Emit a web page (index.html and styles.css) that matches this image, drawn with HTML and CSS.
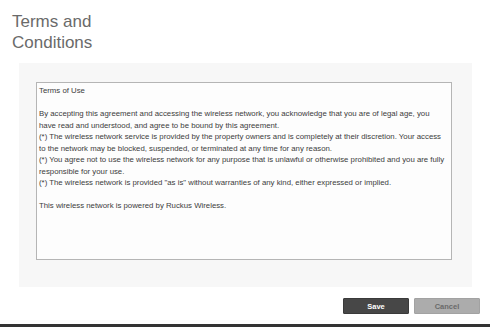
FILE: index.html
```html
<!DOCTYPE html>
<html lang="en">
<head>
    <meta charset="UTF-8">
    <meta name="viewport" content="width=device-width, initial-scale=1.0">
    <title>Terms and Conditions</title>
    <link rel="stylesheet" href="styles.css">
</head>
<body>

    <main class="page">
        <h1 class="title">Terms and<br>Conditions</h1>

        <section class="panel">
            <div class="terms">
                <p>Terms of Use</p>
                <p class="gap">By accepting this agreement and accessing the wireless network, you acknowledge that you are of legal age, you have read and understood, and agree to be bound by this agreement.<br>
                (*) The wireless network service is provided by the property owners and is completely at their discretion. Your access to the network may be blocked, suspended, or terminated at any time for any reason.<br>
                (*) You agree not to use the wireless network for any purpose that is unlawful or otherwise prohibited and you are fully responsible for your use.<br>
                (*) The wireless network is provided "as is" without warranties of any kind, either expressed or implied.</p>
                <p class="gap">This wireless network is powered by Ruckus Wireless.</p>
            </div>
        </section>

        <div class="actions">
            <button class="btn btn-save">Save</button>
            <button class="btn btn-cancel">Cancel</button>
        </div>
    </main>

    <footer class="footer-bar"></footer>

</body>
</html>
```

FILE: styles.css
```css
:root {
    --title-grey: #6a6a6a;
    --panel-bg: #f7f7f7;
    --box-bg: #fdfdfd;
    --box-border: #b5b5b5;
    --text: #3c3c3c;
    --save-bg: #474747;
    --cancel-bg: #acacac;
}

* {
    margin: 0;
    padding: 0;
    box-sizing: border-box;
    font-family: 'Liberation Sans', Arial, Helvetica, sans-serif;
}

body {
    background-color: #ffffff;
    width: 490px;
    height: 327px;
    overflow: hidden;
    display: flex;
    flex-direction: column;
}

.page {
    flex: 1;
    display: flex;
    flex-direction: column;
}

/* Titulo */
.title {
    margin: 11px 0 0 12px;
    font-size: 17px;
    line-height: 21px;
    font-weight: normal;
    color: var(--title-grey);
}

/* Panel gris con el texto */
.panel {
    margin: 10px 18px 0 19px;
    padding: 19px 20px 27px 17px;
    background-color: var(--panel-bg);
}

.terms {
    height: 178px;
    padding: 2px 6px 2px 2px;
    background-color: var(--box-bg);
    border: 1px solid var(--box-border);
    color: var(--text);
    font-size: 7.8px;
    line-height: 11.5px;
}

.terms .gap {
    margin-top: 11.5px;
}

/* Botones */
.actions {
    display: flex;
    justify-content: flex-end;
    gap: 5px;
    margin: 11px 10px 0 0;
}

.btn {
    width: 66px;
    height: 16px;
    border: 1px solid transparent;
    border-radius: 1px;
    font-size: 7.5px;
    font-weight: bold;
    cursor: pointer;
}

.btn-save {
    background-color: var(--save-bg);
    border-color: #3a3a3a;
    color: #ffffff;
}

.btn-cancel {
    background-color: var(--cancel-bg);
    border-color: #a2a2a2;
    color: #6a6a6a;
}

.footer-bar {
    height: 3px;
    background-color: #333333;
}
```
